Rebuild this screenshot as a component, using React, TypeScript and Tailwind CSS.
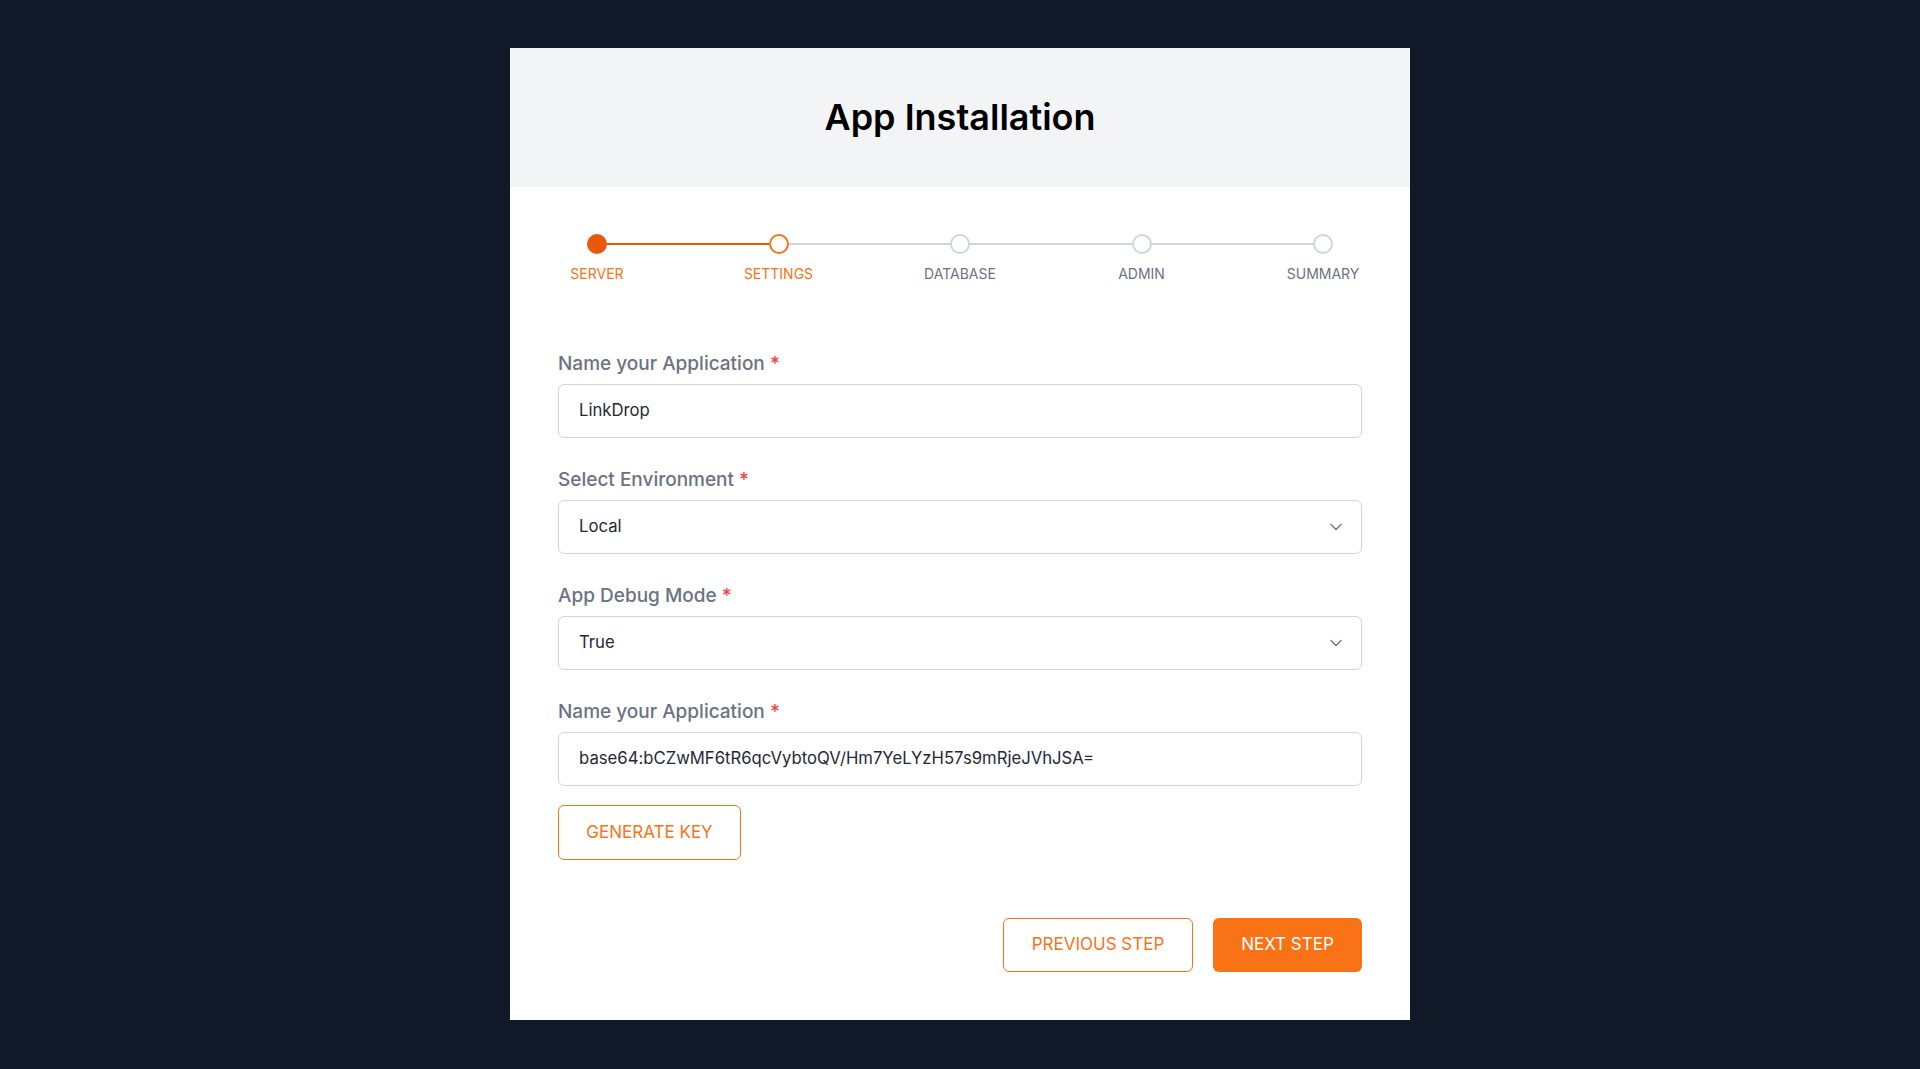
import React from "react";
import { ChevronDown } from "lucide-react";

const steps = [
  { name: "SERVER", state: "done" },
  { name: "SETTINGS", state: "current" },
  { name: "DATABASE", state: "todo" },
  { name: "ADMIN", state: "todo" },
  { name: "SUMMARY", state: "todo" },
];

function Stepper() {
  const items: React.ReactNode[] = [];
  steps.forEach((s, i) => {
    if (i > 0) {
      items.push(
        <div
          key={"l" + i}
          className={
            "flex-1 h-[2px] mt-[9px] -mx-[35px] " +
            (i <= 1 ? "bg-[#ea580c]" : "bg-[#d1d5db]")
          }
        />
      );
    }
    items.push(
      <div key={s.name} className="relative z-10 flex w-[90px] shrink-0 flex-col items-center">
        <div
          className={
            "h-5 w-5 rounded-full " +
            (s.state === "done"
              ? "bg-[#ea580c]"
              : s.state === "current"
              ? "border-2 border-[#f97316] bg-white"
              : "border-2 border-[#d1d5db] bg-white")
          }
        />
        <div
          className={
            "mt-[10px] text-[14px] leading-5 whitespace-nowrap " +
            (s.state === "todo" ? "text-[#6b7280]" : "text-[#f97316]")
          }
        >
          {s.name}
        </div>
      </div>
    );
  });
  return <div className="-mx-[6px] flex items-start">{items}</div>;
}

function Label({ children }: { children: React.ReactNode }) {
  return (
    <div className="mb-2 h-6 text-[19px] leading-6 font-medium text-[#6b7280]">
      {children} <span className="text-[#ef4444]">*</span>
    </div>
  );
}

function TextBox({ value }: { value: string }) {
  return (
    <div className="flex h-[54px] items-center rounded-md border border-[#d1d5db] bg-white px-[20px] text-[16.7px] text-[#1f2937]">
      {value}
    </div>
  );
}

function SelectBox({ value }: { value: string }) {
  return (
    <div className="flex h-[54px] items-center justify-between rounded-md border border-[#d1d5db] bg-white pl-[20px] pr-[15px] text-[16.7px] text-[#1f2937]">
      <span>{value}</span>
      <ChevronDown size={20} strokeWidth={1.5} className="text-[#6b7280]" />
    </div>
  );
}

export default function App() {
  return (
    <div
      className="flex min-h-screen justify-center bg-[#111827] pt-12"
      style={{ fontFamily: "Inter, 'Noto Sans', sans-serif" }}
    >
      <div className="h-[972px] w-[900px] bg-white">
        <div className="flex h-[139px] items-center justify-center bg-[#f3f4f6] pb-[2px]">
          <h1 className="text-[36px] font-semibold text-black">App Installation</h1>
        </div>
        <div className="px-12 pt-[47px] pb-12">
          <Stepper />
          <div className="mt-[68px] flex flex-col gap-[30px]">
            <div>
              <Label>Name your Application</Label>
              <TextBox value="LinkDrop" />
            </div>
            <div>
              <Label>Select Environment</Label>
              <SelectBox value="Local" />
            </div>
            <div>
              <Label>App Debug Mode</Label>
              <SelectBox value="True" />
            </div>
            <div>
              <Label>Name your Application</Label>
              <TextBox value="base64:bCZwMF6tR6qcVybtoQV/Hm7YeLYzH57s9mRjeJVhJSA=" />
            </div>
          </div>
          <button className="mt-[19px] flex h-[55px] w-[183px] items-center justify-center rounded-md border border-[#f97316] bg-white text-[17px] text-[#f97316]">
            GENERATE KEY
          </button>
          <div className="mt-[58px] flex justify-end gap-5">
            <button className="flex h-[54px] w-[190px] items-center justify-center rounded-md border border-[#f97316] bg-white text-[17px] text-[#f97316]">
              PREVIOUS STEP
            </button>
            <button className="flex h-[54px] w-[149px] items-center justify-center rounded-md bg-[#f97316] text-[17px] text-white">
              NEXT STEP
            </button>
          </div>
        </div>
      </div>
    </div>
  );
}
